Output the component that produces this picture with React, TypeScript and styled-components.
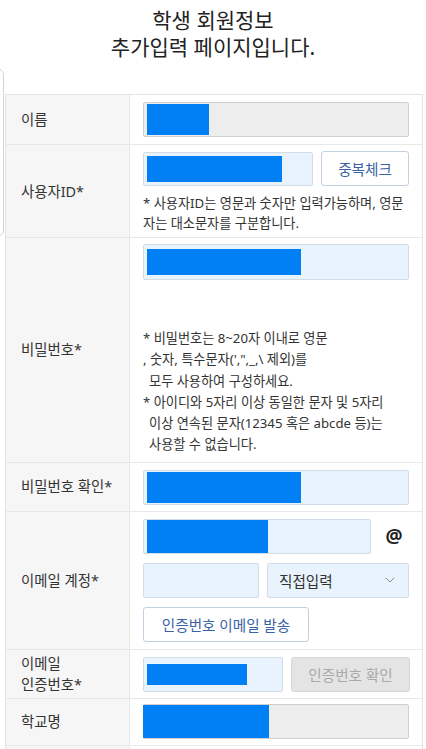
import React, { FC } from 'react';
import styled, { createGlobalStyle } from 'styled-components';
import { ChevronDown } from 'lucide-react';

const GlobalStyle = createGlobalStyle`
  html, body {
    margin: 0;
    padding: 0;
    background: #fff;
  }
  body {
    font-family: "Noto Sans", "Noto Sans CJK KR", sans-serif;
    color: #333;
  }
`;

const Page = styled.div`
  position: relative;
  width: 426px;
  height: 749px;
  overflow: hidden;
`;

const SideTab = styled.div`
  position: absolute;
  top: 68px;
  left: -20px;
  width: 22px;
  height: 167px;
  border: 1px solid #d4d4d4;
  border-radius: 7px;
`;

const Title = styled.h1`
  margin: 0;
  padding-top: 7px;
  font-size: 21px;
  font-weight: 400;
  line-height: 27px;
  text-align: center;
  color: #222;
`;

const Table = styled.div`
  margin: 33px 3px 0 5px;
  border-top: 1px solid #e4e4e4;
  border-left: 1px solid #e4e4e4;
  border-right: 1px solid #e4e4e4;
`;

const Row = styled.div`
  display: grid;
  grid-template-columns: 124px 1fr;
  border-bottom: 1px solid #e8e8e8;
`;

const Label = styled.div`
  display: flex;
  align-items: center;
  padding-left: 15px;
  background: #f6f6f6;
  border-right: 1px solid #e8e8e8;
  font-size: 14.4px;
  line-height: 21px;
  color: #333;
`;

const Cell = styled.div<{ $pt?: number; $pb?: number }>`
  display: grid;
  row-gap: 9px;
  justify-items: stretch;
  padding: ${p => p.$pt ?? 7}px 13px ${p => p.$pb ?? 7}px 13px;
`;

const Line = styled.div`
  display: flex;
  align-items: center;
  gap: 8px;
`;

const Field = styled.div<{ $readonly?: boolean; $w?: number; $h?: number }>`
  box-sizing: border-box;
  display: flex;
  align-items: center;
  height: ${p => p.$h ?? 35}px;
  ${p => (p.$w ? `width: ${p.$w}px; flex: none;` : 'flex: 1;')}
  padding-left: 3px;
  background: ${p => (p.$readonly ? '#ededed' : '#e8f3fd')};
  border: 1px solid ${p => (p.$readonly ? '#cfcfcf' : '#d3dde8')};
  border-radius: 2px;
`;

const Redact = styled.span<{ $w: number; $inset?: number; $flush?: boolean }>`
  display: block;
  width: ${p => p.$w}px;
  height: calc(100% - ${p => (p.$inset ?? 2) * 2}px);
  background: #0180f6;
  margin-left: ${p => (p.$flush ? -4 : 0)}px;
`;

const Btn = styled.button<{ $disabled?: boolean; $w?: number }>`
  box-sizing: border-box;
  flex: none;
  justify-self: start;
  height: 35px;
  ${p => (p.$w ? `width: ${p.$w}px;` : '')}
  padding: 0;
  font-family: inherit;
  font-size: 14.6px;
  color: ${p => (p.$disabled ? '#a9a9a9' : '#3a62a6')};
  background: ${p => (p.$disabled ? '#e4e4e4' : '#fff')};
  border: 1px solid ${p => (p.$disabled ? '#d6d6d6' : '#c3d0e2')};
  border-radius: 3px;
`;

const At = styled.span`
  width: 30px;
  text-align: center;
  font-size: 19px;
  font-weight: 700;
  color: #222;
`;

const Select = styled.div`
  box-sizing: border-box;
  flex: 1;
  height: 35px;
  display: flex;
  align-items: center;
  justify-content: space-between;
  padding: 0 10px 0 11px;
  background: #e8f3fd;
  border: 1px solid #d3dde8;
  border-radius: 2px;
  font-size: 14.6px;
  color: #333;
  svg {
    color: #8a8a8a;
  }
`;

const Help = styled.div<{ $mt?: number }>`
  margin-top: ${p => p.$mt ?? 0}px;
  font-size: 13.2px;
  color: #333;
`;

const HelpLine = styled.div<{ $indent?: number; $lh?: number }>`
  white-space: nowrap;
  padding-left: ${p => p.$indent ?? 0}px;
  line-height: ${p => p.$lh ?? 20}px;
`;

const pwHelp: [string, number][] = [
  ['* 비밀번호는 8~20자 이내로 영문', 0],
  [', 숫자, 특수문자(\',",_,\\ 제외)를', -2],
  ['모두 사용하여 구성하세요.', 6],
  ['* 아이디와 5자리 이상 동일한 문자 및 5자리', 0],
  ['이상 연속된 문자(12345 혹은 abcde 등)는', 6],
  ['사용할 수 없습니다.', 6],
];

const App: FC = () => (
  <Page>
    <GlobalStyle />
    <SideTab />
    <Title>
      학생 회원정보
      <br />
      추가입력 페이지입니다.
    </Title>
    <Table>
      <Row>
        <Label>이름</Label>
        <Cell>
          <Field $readonly>
            <Redact $w={62} $inset={1} />
          </Field>
        </Cell>
      </Row>
      <Row>
        <Label>사용자ID*</Label>
        <Cell $pt={6} $pb={4}>
          <Line>
            <Field $h={34}>
              <Redact $w={135} $inset={3} />
            </Field>
            <Btn $w={88}>중복체크</Btn>
          </Line>
          <Help $mt={-2}>
            <HelpLine>* 사용자ID는 영문과 숫자만 입력가능하며, 영문</HelpLine>
            <HelpLine>자는 대소문자를 구분합니다.</HelpLine>
          </Help>
        </Cell>
      </Row>
      <Row>
        <Label>비밀번호*</Label>
        <Cell $pt={6} $pb={6}>
          <Field $h={36}>
            <Redact $w={154} $inset={4} />
          </Field>
          <Help $mt={39}>
            {pwHelp.map(([text, indent]) => (
              <HelpLine key={text} $indent={indent} $lh={21.3}>
                {text}
              </HelpLine>
            ))}
          </Help>
        </Cell>
      </Row>
      <Row>
        <Label>비밀번호 확인*</Label>
        <Cell $pt={7} $pb={6}>
          <Field>
            <Redact $w={154} $inset={1} />
          </Field>
        </Cell>
      </Row>
      <Row>
        <Label>이메일 계정*</Label>
        <Cell>
          <Line>
            <Field>
              <Redact $w={121} $inset={0} />
            </Field>
            <At>@</At>
          </Line>
          <Line>
            <Field $w={116} />
            <Select>
              직접입력
              <ChevronDown size={16} strokeWidth={1.5} />
            </Select>
          </Line>
          <Btn $w={166}>인증번호 이메일 발송</Btn>
        </Cell>
      </Row>
      <Row>
        <Label>
          이메일
          <br />
          인증번호*
        </Label>
        <Cell $pt={7} $pb={6}>
          <Line>
            <Field $w={140}>
              <Redact $w={100} $inset={6} />
            </Field>
            <Btn $disabled $w={119}>
              인증번호 확인
            </Btn>
          </Line>
        </Cell>
      </Row>
      <Row>
        <Label>학교명</Label>
        <Cell $pt={5} $pb={6}>
          <Field $readonly>
            <Redact $w={126} $inset={0} $flush />
          </Field>
        </Cell>
      </Row>
      <Row>
        <Label />
        <Cell>
          <Field $readonly />
        </Cell>
      </Row>
    </Table>
  </Page>
);

export default App;
